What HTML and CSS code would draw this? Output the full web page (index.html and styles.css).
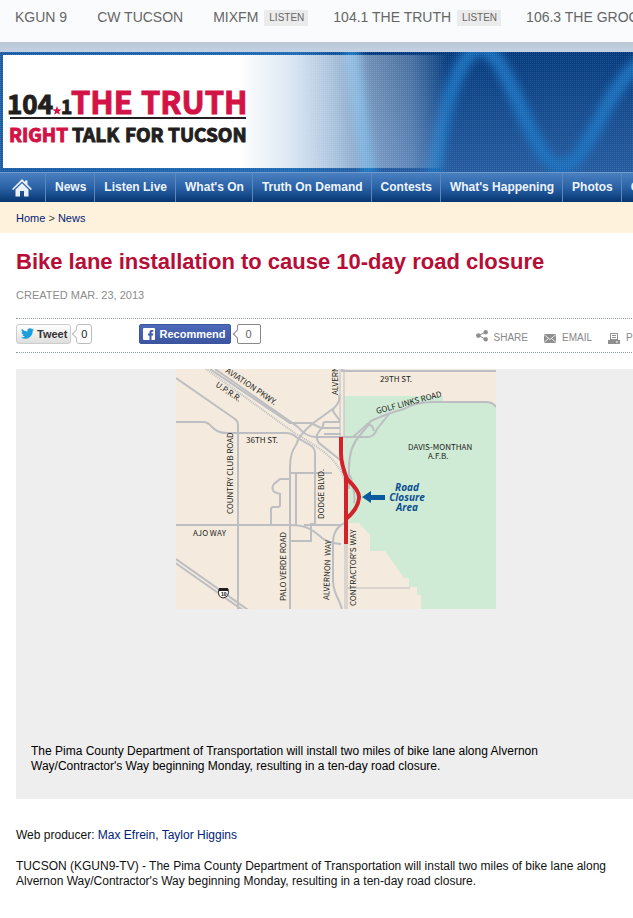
FILE: index.html
```
<!DOCTYPE html>
<html lang="en">
<head>
<meta charset="UTF-8">
<meta name="viewport" content="width=device-width, initial-scale=1.0">
<title>Bike lane installation to cause 10-day road closure</title>
<link rel="stylesheet" href="styles.css">
</head>
<body>
<nav class="stations">
<a href="#">KGUN 9</a>
<a href="#">CW TUCSON</a>
<div class="station"><a href="#">MIXFM</a><a class="listen" href="#">LISTEN</a></div>
<div class="station"><a href="#">104.1 THE TRUTH</a><a class="listen" href="#">LISTEN</a></div>
<div class="station"><a href="#">106.3 THE GROOVE</a><a class="listen" href="#">LISTEN</a></div>
</nav>
<header class="masthead">
<svg class="waves" viewBox="0 0 633 120" preserveAspectRatio="xMinYMin slice" aria-hidden="true">
<defs>
<linearGradient id="sky" x1="0" y1="0" x2="0" y2="1"><stop offset="0" stop-color="#053a7c"/><stop offset="1" stop-color="#265c9f"/></linearGradient>
<linearGradient id="left" x1="0" y1="0" x2="1" y2="0"><stop offset="0" stop-color="#1c5da4"/><stop offset="0.8" stop-color="#1f6bb4"/><stop offset="1" stop-color="#1f6bb4" stop-opacity="0"/></linearGradient>
<linearGradient id="fade" x1="0" y1="0" x2="1" y2="0"><stop offset="0" stop-color="#fff"/><stop offset="0.53" stop-color="#fff"/><stop offset="0.64" stop-color="#fff" stop-opacity="0.85"/><stop offset="0.74" stop-color="#fff" stop-opacity="0.64"/><stop offset="0.82" stop-color="#fff" stop-opacity="0.42"/><stop offset="0.92" stop-color="#fff" stop-opacity="0.26"/><stop offset="1" stop-color="#fff" stop-opacity="0"/></linearGradient>
<pattern id="dots" width="2" height="2" patternUnits="userSpaceOnUse"><rect width="1" height="1" fill="#8fbbe8" fill-opacity="0.2"/></pattern>
<filter id="soft" x="-20%" y="-20%" width="140%" height="140%" color-interpolation-filters="sRGB"><feGaussianBlur stdDeviation="4"/></filter>
</defs>
<rect width="633" height="120" fill="url(#sky)"/>
<rect width="370" height="120" fill="url(#left)"/>
<g fill="none" stroke="#1a6fbb" filter="url(#soft)">
<path d="M350 -8 C358 40 362 80 370 130" stroke="#1f78c2" stroke-width="16"/>
<path d="M432 130 C441 80 452 8 478 -4 C510 -8 528 112 562 115 C590 112 604 32 645 8" stroke-width="14"/>
</g>
<rect width="633" height="120" fill="url(#dots)"/>
<rect x="3" y="3" width="445" height="113" fill="url(#fade)"/>
</svg>
<a class="logo" href="#">
<svg width="250" height="62" viewBox="0 0 250 62" role="img" aria-label="104.1 The Truth, Right Talk for Tucson">
<g class="logo-big">
<text class="logo-num" x="-1" y="29" fill="#231f20" stroke="#231f20">104</text>
<text x="63" y="29" fill="#d31245" stroke="#d31245">THE</text>
<text x="133" y="29" fill="#d31245" stroke="#d31245">TRUTH</text>
</g>
<text class="logo-small" x="53" y="29" fill="#231f20" stroke="#231f20">1</text>
<path d="M49 21 l1.2 3.3 3.4 .1 -2.7 2.1 1 3.3 -2.9 -1.9 -2.9 1.9 1 -3.3 -2.7 -2.1 3.4 -.1z" fill="#d31245"/>
<rect x="2" y="32" width="236" height="2" fill="#231f20"/>
<g class="logo-small" fill="#231f20" stroke="#231f20">
<text x="1" y="57" fill="#d31245" stroke="#d31245">RIGHT</text>
<text x="64" y="57">TALK</text>
<text x="117" y="57">FOR</text>
<text x="160" y="57">TUCSON</text>
</g>
</svg>
</a>
</header>
<nav class="menu">
<a class="home" href="#" aria-label="Home"><svg width="20" height="18" viewBox="0 0 20 18" fill="#e9f0fa"><path d="M10 0 L13 3 V1.500 H15.500 V5.500 L20 10 L18.800 11 L10 2.500 L1.200 11 L0 10Z"/><path d="M10 4.200 L16.500 10.500 V17.500 H12 V12 H8 V17.500 H3.500 V10.500Z"/></svg></a>
<a href="#">News</a>
<a href="#">Listen Live</a>
<a href="#">What's On</a>
<a href="#">Truth On Demand</a>
<a href="#">Contests</a>
<a href="#">What's Happening</a>
<a href="#">Photos</a>
<a href="#">Community</a>
</nav>
<div class="crumbs"><a href="#">Home</a> &gt; <a href="#">News</a></div>
<main class="article">
<h1>Bike lane installation to cause 10-day road closure</h1>
<p class="created">CREATED MAR. 23, 2013</p>
<div class="sharebar">
<button class="tweet" type="button"><svg width="13" height="13" viewBox="0 0 24 24" fill="#1b9fdb"><path d="M23.953 4.570a10 10 0 01-2.825.775 4.958 4.958 0 002.163-2.723c-.951.555-2.005.959-3.127 1.184a4.920 4.920 0 00-8.384 4.482C7.690 8.095 4.067 6.130 1.640 3.162a4.822 4.822 0 00-.666 2.475c0 1.710.870 3.213 2.188 4.096a4.904 4.904 0 01-2.228-.616v.060a4.923 4.923 0 003.946 4.827 4.996 4.996 0 01-2.212.085 4.936 4.936 0 004.604 3.417 9.867 9.867 0 01-6.102 2.105c-.390 0-.779-.023-1.170-.067a13.995 13.995 0 007.557 2.209c9.053 0 13.998-7.496 13.998-13.985 0-.210 0-.420-.015-.630A9.935 9.935 0 0024 4.590z"/></svg>Tweet</button>
<a class="count" href="#">0</a>
<button class="recommend" type="button"><svg width="12" height="12" viewBox="0 0 12 12"><rect width="12" height="12" rx="1" fill="#fff"/><path d="M6.500 12 V7.400 H5 V5.500 H6.500 V4.200 C6.500 2.700 7.300 1.900 8.800 1.900 H10.300 V3.700 H9.300 C8.700 3.700 8.500 4 8.500 4.500 V5.500 H10.300 L10 7.400 H8.500 V12Z" fill="#3f5ba9"/></svg>Recommend</button>
<span class="count count-fb">0</span>
<div class="tools">
<a href="#"><svg class="up" width="12" height="12" viewBox="0 0 12 12" fill="#8f8f8f"><path d="M2.500 5.500 L10 2 M2.500 5.500 L10 9.500" stroke="#8f8f8f"/><circle cx="2.300" cy="5.600" r="2.300"/><circle cx="9.700" cy="2.200" r="2.200"/><circle cx="9.700" cy="9.300" r="2.200"/></svg>SHARE</a>
<a href="#"><svg width="12" height="12" viewBox="0 0 12 12"><rect y="2" width="12" height="9" fill="#8f8f8f"/><path d="M0 2.500 L6 7.500 L12 2.500 M0 10.500 L4.500 6.500 M12 10.500 L7.500 6.500" fill="none" stroke="#fff" stroke-width=".8"/></svg>EMAIL</a>
<a href="#"><svg width="12" height="12" viewBox="0 0 12 12"><path d="M2.500 8 V1.500 H9.500 V8" fill="none" stroke="#8f8f8f"/><path d="M4 3.500h4M4 5.500h4M2 7.500h8" stroke="#8f8f8f"/><path d="M0 8h12v4H0z" fill="#8f8f8f"/><path d="M8 10h2" stroke="#fff"/></svg>PRINT</a>
</div>
</div>
<figure class="photo">
<svg class="map" width="320" height="240" viewBox="0 0 320 240" role="img" aria-label="Map of the road closure on Alvernon Way">
<rect width="320" height="240" fill="#f4eade"/>
<path d="M168 27 H267 V33 H310 Q317 33 320 38 V240 H245 V226 H241 V218 H233 V209 H228 L209 182 H194 V166 L183 154 H168Z" fill="#cfead5"/>
<g class="road">
<path d="M0 9 L59 50 Q62 52 62 56 V240"/>
<path d="M0 53 H27 Q32 53 36 58 Q42 64 50 64 H110 Q116 64 120 68 L134 76 Q139 79 139 84 V155 H135 V172 H115"/>
<path d="M34 0 L114 54 H135 Q141 57 145 59 H164"/>
<path d="M39 0 L122 58 Q130 68 140 68 H168"/>
<path d="M0 156 H114 C132 156 138 162 146 169 Q152 174 165 175"/>
<path d="M128 156 H164"/>
<path d="M164 0 V68 M168 0 V68" stroke-width="1"/>
<path d="M166 0 V2 H320"/>
<path d="M163 26 Q165 32 158 39 L136 55 Q123 66 120 76 Q114 84 114 98 V240"/>
<path d="M158 39 Q156 42 159 45 L164 52 M164 53 H149 Q147 53 147 57 L142 64 Q139 68 143 74 L168 94 M148 65 H165"/>
<path d="M114 104 H156 M120 104 V156"/>
<path d="M114 110 H104 L98 115 Q95 119 98 123 L104 125 V136 Q104 138 102 138 H97 Q95 138 95 141 V156"/>
<path d="M168 68 H177 L195 52 Q212 44 228 40 Q240 33 256 33 H310 Q317 33 320 38"/>
<path d="M177 68 H192 Q198 68 201 60 L213 45 M190 55 Q197 55 198 62"/>
<path d="M173 120 V99 Q173 78 184 66 L194 54 M174 106 Q180 126 178 134"/>
<path d="M171 240 V174 M171 219 H234" stroke-width="1"/>
<path d="M171 153 Q157 158 157 174 V212 Q157 220 163 232 L166 240"/>
<path d="M0 190 L75 243 M-2 193 L68 242" stroke-width="2"/>
</g>
<path class="rail" d="M30 0 L120 65 Q154 84 162 98 Q169 105 169 120 V240"/>
<path d="M165 68 V84 Q165 95 171 110 Q184 122 183 129 Q182 140 170 150 M170 108 V175" fill="none" stroke="#d2232a" stroke-width="4"/>
<path d="M186 128 L195 122 V126 H209 V131 H195 V134Z" fill="#0b5aa0"/>
<g class="label">
<text transform="translate(49 3) rotate(34)">AVIATION PKWY.</text>
<text transform="translate(39 17) rotate(34)">U.P.R.R.</text>
<text transform="translate(162 26) rotate(-90)">ALVERN</text>
<text x="204" y="13">29TH ST.</text>
<text x="70" y="74">36TH ST.</text>
<text transform="translate(201 45) rotate(-15)">GOLF LINKS ROAD</text>
<text x="232" y="81">DAVIS-MONTHAN</text>
<text x="252" y="90">A.F.B.</text>
<text transform="translate(57 145) rotate(-90)">COUNTRY CLUB ROAD</text>
<text transform="translate(148 150) rotate(-90)">DODGE BLVD.</text>
<text x="17" y="167">AJO WAY</text>
<text transform="translate(110 232) rotate(-90)">PALO VERDE ROAD</text>
<text transform="translate(153 231) rotate(-88)">ALVERNON&#160; WAY</text>
<text transform="translate(180 237) rotate(-90)">CONTRACTOR'S WAY</text>
</g>
<g class="closure">
<text x="231" y="122">Road</text>
<text x="231" y="132">Closure</text>
<text x="231" y="142">Area</text>
</g>
<path d="M43 220 H52 Q54 228 47 229 Q41 228 43 220Z" fill="#fff" stroke="#231f20"/>
<path d="M43 219 h9 v3 h-9z" fill="#231f20"/>
<text class="shield" x="45" y="227">10</text>
</svg>
<figcaption>The Pima County Department of Transportation will install two miles of bike lane along Alvernon Way/Contractor's Way beginning Monday, resulting in a ten-day road closure.</figcaption>
</figure>
<p>Web producer: <a href="#">Max Efrein</a>, <a href="#">Taylor Higgins</a></p>
<p>TUCSON (KGUN9-TV) - The Pima County Department of Transportation will install two miles of bike lane along Alvernon Way/Contractor's Way beginning Monday, resulting in a ten-day road closure.</p>
</main>
</body>
</html>
```
FILE: styles.css
```
* {
box-sizing: border-box;
}
body {
margin: 0;
background: #fff;
color: #111;
font-family: "Liberation Sans", Arial, sans-serif;
font-size: 12px;
line-height: 15px;
overflow-x: hidden;
}
a {
color: #002277;
text-decoration: none;
}
svg {
flex: none;
}
.stations {
display: flex;
gap: 30px;
height: 52px;
padding: 9px 15px 0;
background: linear-gradient(#fafbfd 42px, #bac7d3 42px, #c4d1e4);
font-size: 14px;
line-height: 16px;
white-space: nowrap;
overflow: hidden;
}
.stations a {
color: #666;
}
.station {
display: flex;
gap: 6px;
margin-right: -5px;
}
.stations .listen {
height: 16px;
margin-top: 1px;
padding: 0 4px 0 5px;
background: #ebebeb;
font-size: 10px;
}
.masthead {
position: relative;
height: 120px;
overflow: hidden;
}
.waves {
display: block;
width: 100%;
height: 100%;
}
.logo {
position: absolute;
left: 8px;
top: 33px;
}
.logo-big, .logo-small {
font-family: "Noto Sans CJK JP", "Liberation Sans", sans-serif;
font-weight: bold;
font-size: 31px;
stroke-width: 1;
}
.logo-num {
font-size: 26px;
}
.logo-small {
font-size: 19px;
}
.menu {
display: flex;
height: 30px;
border-top: 1px solid #6f9bd0;
background: linear-gradient(#4a80c0, #2a62a6 50%, #063672);
white-space: nowrap;
overflow: hidden;
}
.menu a {
flex: none;
padding: 0 8px 0 9px;
border-left: 1px solid #5c87bd;
color: #eef4fc;
font-weight: bold;
line-height: 28px;
}
.menu .home {
padding: 6px 13px 0 12px;
border-left: 0;
line-height: 0;
}
.crumbs {
height: 31px;
padding: 0 16px;
background: #fff2dc;
color: #444;
font-size: 11px;
line-height: 32px;
}
/* the story column keeps its width and runs off small windows */
.article {
min-width: 656px;
max-width: 656px;
padding-left: 16px;
}
h1 {
margin: 16px 0 14px;
color: #b70d36;
font-size: 22px;
line-height: 26px;
}
p {
margin: 0 0 16px;
}
.created {
color: #8c8c8c;
font-size: 11px;
line-height: 13px;
}
.sharebar {
display: flex;
align-items: center;
height: 35px;
margin-bottom: 16px;
border-top: 1px dotted #8d9cab;
border-bottom: 1px dotted #8d9cab;
}
.tweet, .recommend {
display: flex;
align-items: center;
gap: 3px;
height: 20px;
margin: 0 5px 4px 0;
padding: 0 3px 0 4px;
border: 1px solid #ccc;
border-radius: 3px;
background: linear-gradient(#fff, #dedede);
color: #333;
font: bold 11px "Liberation Sans", Arial, sans-serif;
}
.recommend {
gap: 4px;
margin: 0 6px 4px 47px;
padding: 0 4px 0 3px;
border-color: #3b54a0;
border-radius: 2px;
background: linear-gradient(#4c69ba, #3b55a0);
color: #fff;
}
.count {
position: relative;
height: 20px;
margin-bottom: 4px;
padding: 0 4px;
border: 1px solid #bbb;
border-radius: 3px;
color: #222;
font-size: 11px;
line-height: 18px;
}
.count::before {
content: "";
position: absolute;
left: -4px;
top: 6px;
width: 5px;
height: 5px;
border-left: 1px solid #bbb;
border-bottom: 1px solid #bbb;
background: #fff;
transform: rotate(45deg);
}
.count-fb {
padding: 0 8px;
border-color: #888;
border-radius: 2px;
color: #666;
}
.count-fb::before {
border-color: #888;
}
.tools {
display: flex;
gap: 16px;
margin: 4px 0 0 auto;
}
.tools a {
display: flex;
align-items: center;
gap: 6px;
color: #888;
font-size: 10px;
line-height: 12px;
}
.tools .up {
margin-bottom: 4px;
}
.photo {
display: flex;
flex-direction: column;
margin: 0 0 29px;
min-height: 430px;
padding-bottom: 25px;
background: #eee;
}
.map {
align-self: center;
}
.photo figcaption {
margin-top: auto;
padding: 0 30px 0 15px;
color: #000;
}
.road {
fill: none;
stroke: #bdbec1;
stroke-width: 2;
}
.rail {
fill: none;
stroke: #bdbec1;
stroke-width: 2;
stroke-dasharray: 1 1;
}
.label {
fill: #231f20;
font-family: "Noto Sans CJK JP", "Liberation Sans", sans-serif;
font-size: 8px;
}
.closure {
fill: #0b4f93;
font-family: "Open Sans", sans-serif;
font-size: 10px;
font-style: italic;
font-weight: bold;
text-anchor: middle;
}
.shield {
font-size: 5px;
font-weight: bold;
}
```
